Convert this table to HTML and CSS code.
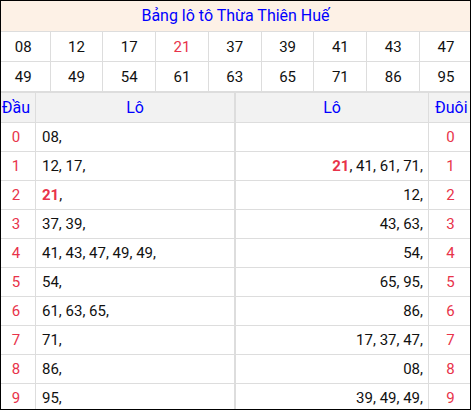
FILE: index.html
```html
<!DOCTYPE html>
<html lang="vi">
<head>
<meta charset="utf-8">
<title>Bảng lô tô Thừa Thiên Huế</title>
<link rel="stylesheet" href="styles.css">
</head>
<body>
<div class="frame">
  <div class="title">Bảng lô tô Thừa Thiên Huế</div>
  <div class="nums">
    <div class="n">08</div><div class="n">12</div><div class="n">17</div><div class="n red">21</div><div class="n">37</div><div class="n">39</div><div class="n">41</div><div class="n">43</div><div class="n">47</div>
    <div class="n">49</div><div class="n">49</div><div class="n">54</div><div class="n">61</div><div class="n">63</div><div class="n">65</div><div class="n">71</div><div class="n">86</div><div class="n">95</div>
  </div>
  <div class="lt">
    <div class="h dau">Đầu</div><div class="h lo1">Lô</div><div class="h">Lô</div><div class="h duoi">Đuôi</div>

    <div class="d k">0</div><div class="d l lo1">08,</div><div class="d r"></div><div class="d k e">0</div>
    <div class="d k">1</div><div class="d l lo1">12, 17,</div><div class="d r"><b>21</b>, 41, 61, 71,</div><div class="d k e">1</div>
    <div class="d k">2</div><div class="d l lo1"><b>21</b>,</div><div class="d r">12,</div><div class="d k e">2</div>
    <div class="d k">3</div><div class="d l lo1">37, 39,</div><div class="d r">43, 63,</div><div class="d k e">3</div>
    <div class="d k">4</div><div class="d l lo1">41, 43, 47, 49, 49,</div><div class="d r">54,</div><div class="d k e">4</div>
    <div class="d k">5</div><div class="d l lo1">54,</div><div class="d r">65, 95,</div><div class="d k e">5</div>
    <div class="d k">6</div><div class="d l lo1">61, 63, 65,</div><div class="d r">86,</div><div class="d k e">6</div>
    <div class="d k">7</div><div class="d l lo1">71,</div><div class="d r">17, 37, 47,</div><div class="d k e">7</div>
    <div class="d k">8</div><div class="d l lo1">86,</div><div class="d r">08,</div><div class="d k e">8</div>
    <div class="d k">9</div><div class="d l lo1">95,</div><div class="d r">39, 49, 49,</div><div class="d k e">9</div>
  </div>
</div>
</body>
</html>
```
FILE: styles.css
```css
html, body {
  margin: 0;
  padding: 0;
  background: #fff;
}
body {
  font-family: Roboto, "Liberation Sans", Arial, sans-serif;
  color: #111;
}
.frame {
  width: 471px;
  height: 410px;
  box-sizing: border-box;
  border: 1px solid #000;
  overflow: hidden;
}
.title {
  height: 30px;
  line-height: 30px;
  background: #fdf1e6;
  color: #0000ff;
  font-size: 16px;
  text-align: center;
  border-bottom: 1px solid #ddd;
}
.nums {
  display: grid;
  grid-template-columns: 48.5px repeat(7, 51.8px) 1fr;
  grid-auto-rows: 29px;
  gap: 1px;
  background: #ddd;
  padding-bottom: 2px;
}
.n {
  background: #fff;
  font-size: 15px;
  display: flex;
  align-items: center;
  justify-content: center;
}
.n:nth-child(9n+1) { padding-right: 4px; }
.n:nth-child(9n) { padding-left: 2px; }
.red { color: #e8334a; }
.lt {
  display: grid;
  grid-template-columns: 34px 199px 192px 1fr;
  grid-template-rows: 29px repeat(10, 28px);
  gap: 1px;
  background: #ddd;
}
.h {
  background: #f2f2f2;
  color: #0000ff;
  font-size: 16px;
  display: flex;
  align-items: center;
  justify-content: center;
  white-space: nowrap;
}
.h.dau { padding-right: 4px; }
.h.duoi { justify-content: flex-start; padding-left: 6px; }
.lo1 { border-right: 1px solid #ddd; }
.d {
  background: #fff;
  font-size: 15px;
  display: flex;
  align-items: center;
  white-space: nowrap;
}
.d b { color: #e8334a; font-weight: 700; }
.k {
  color: #e8334a;
  justify-content: center;
  padding-right: 4px;
}
.k.e { padding-right: 0; padding-left: 2px; }
.l { padding-left: 6px; }
.r { justify-content: flex-end; padding-right: 5px; }
```
